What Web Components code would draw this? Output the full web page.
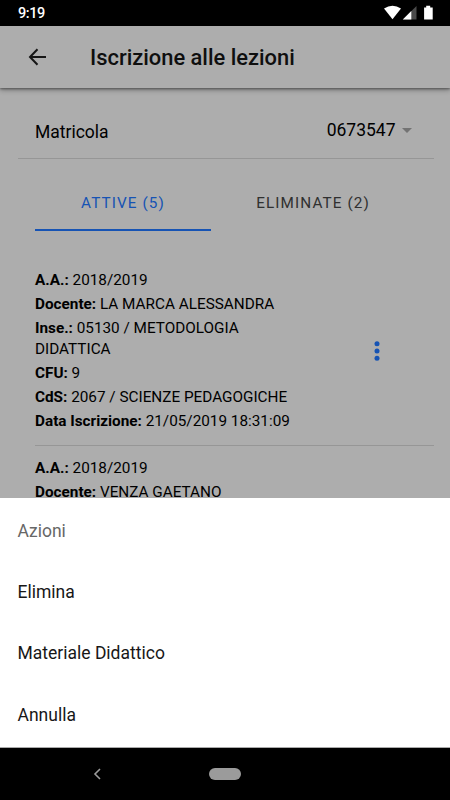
<!DOCTYPE html>
<html lang="it">
<head>
<meta charset="utf-8">
<title>Iscrizione alle lezioni</title>
<style>
html,body{margin:0;height:100%;overflow:hidden}
body{font-family:Roboto,"Noto Sans",sans-serif;background:#000;color:#000}
</style>
</head>
<body>
<phone-screen>
  <status-bar slot="status">9:19</status-bar>
  <app-header>Iscrizione alle lezioni</app-header>
  <select-row label="Matricola">0673547</select-row>
  <tab-bar>
    <tab-item active>ATTIVE (5)</tab-item>
    <tab-item>ELIMINATE (2)</tab-item>
  </tab-bar>
  <lesson-card>
    <lesson-field label="A.A.:">2018/2019</lesson-field>
    <lesson-field label="Docente:">LA MARCA ALESSANDRA</lesson-field>
    <lesson-field label="Inse.:">05130 / METODOLOGIA DIDATTICA</lesson-field>
    <lesson-field label="CFU:">9</lesson-field>
    <lesson-field label="CdS:">2067 / SCIENZE PEDAGOGICHE</lesson-field>
    <lesson-field label="Data Iscrizione:">21/05/2019 18:31:09</lesson-field>
  </lesson-card>
  <lesson-card partial>
    <lesson-field label="A.A.:">2018/2019</lesson-field>
    <lesson-field label="Docente:">VENZA GAETANO</lesson-field>
  </lesson-card>
  <action-sheet slot="sheet" heading="Azioni">
    <sheet-option>Elimina</sheet-option>
    <sheet-option>Materiale Didattico</sheet-option>
    <sheet-option>Annulla</sheet-option>
  </action-sheet>
  <nav-bar slot="nav"></nav-bar>
</phone-screen>
<script>
const define = (name, html) => customElements.define(name, class extends HTMLElement {
  constructor() {
    super();
    this.attachShadow({mode: 'open'}).innerHTML = typeof html === 'function' ? html(this) : html;
  }
});

define('phone-screen', `<style>
:host{display:flex;flex-direction:column;width:450px;height:800px;overflow:hidden;background:#000}
main{height:472px;overflow:hidden;background:#adadad;display:flex;flex-direction:column}
</style><slot name="status"></slot><main><slot></slot></main><slot name="sheet"></slot><slot name="nav"></slot>`);

define('status-bar', `<style>
:host{display:flex;box-sizing:border-box;height:26px;flex:none;background:#000;color:#fff;padding:0 16px 0 18px;justify-content:space-between;align-items:center;font:500 14.5px/26px Roboto,sans-serif;letter-spacing:-.4px}
span{padding-top:2px;line-height:24px}
svg{display:block}
</style><span><slot></slot></span>
<svg width="50" height="16" viewBox="0 0 50 16"><path d="M0 3.4Q8.5-1.8 17 3.4L8.5 14.2Z" fill="#fff"/><path d="M18.8 14.5L32.5 1V14.5Z" fill="#4b4b4b"/><path d="M18.8 14.5L27.3 6.1V14.5Z" fill="#fff"/><path d="M42.2.8h4v1.7h2.5v12h-8.6v-12h2.1Z" fill="#fff"/></svg>`);

define('app-header', `<style>
:host{display:flex;box-sizing:border-box;height:61.5px;flex:none;align-items:center;padding:0 28px;gap:43px;background:#adadad;box-shadow:0 1px 2px #0005,0 2px 5px #0005;position:relative;color:#0f0f0f}
h1{margin:0;padding-top:2px;font-size:21.9px;font-weight:500;line-height:30px;white-space:nowrap}
svg{display:block;margin-top:1px}
</style>
<svg width="19" height="18" viewBox="0 0 19 18" fill="none" stroke="#161616" stroke-width="2"><path d="M18 9H2.5M9.5 1.2L2 9L9.5 16.8"/></svg><h1><slot></slot></h1>`);

define('select-row', el => `<style>
:host{display:flex;box-sizing:border-box;height:71px;flex:none;margin:0 16.5px 0 17.5px;padding:15px 22px 0 17.5px;border-bottom:1px solid #969696;font-size:17.5px;line-height:26px;justify-content:space-between}
label{padding-top:2px}
div{display:flex;align-items:center;height:26px;gap:6px}
i{border:5.5px solid transparent;border-top-color:#737373;border-bottom:0;margin-top:2px}
label,div{margin-top:14px}
</style><label>${el.getAttribute('label')}</label><div><slot></slot><i></i></div>`);

define('tab-bar', `<style>
:host{display:grid;grid-template-columns:176px 204px;flex:none;height:53px;margin:19px 35px 39.5px}
</style><slot></slot>`);

define('tab-item', `<style>
:host{display:flex;box-sizing:border-box;align-items:center;justify-content:center;padding-bottom:1px;font-size:15.3px;font-weight:400;letter-spacing:1.1px;color:#303030;border-bottom:2px solid transparent;white-space:nowrap}
:host([active]){color:#1653b4;border-bottom-color:#1653b4}
</style><slot></slot>`);

define('lesson-card', `<style>
:host{display:flex;box-sizing:border-box;flex:none;margin:0 16.5px 0 35px;padding-bottom:10.1px;border-bottom:1px solid #969696;align-items:center}
:host([partial]){border:0;padding-top:12.8px}
section{width:272px;flex:none}
svg{margin-left:66.5px;margin-top:-2px;flex:none}
:host([partial]) svg{display:none}
</style><section><slot></slot></section><svg width="6" height="20" viewBox="0 0 6 20" fill="#1653b4"><circle cx="3" cy="2.7" r="2.5"/><circle cx="3" cy="10" r="2.5"/><circle cx="3" cy="17.2" r="2.5"/></svg>`);

define('lesson-field', el => `<style>
:host{display:block;font-size:15.3px;line-height:21.9px;margin-bottom:1.85px}
b{font-weight:700}
</style><b>${el.getAttribute('label')}</b> <slot></slot>`);

define('action-sheet', el => `<style>
:host{display:flex;box-sizing:border-box;flex-direction:column;height:250px;flex:none;background:#fff;border-bottom:1px solid #aaa;padding-top:2px}
h2{margin:0;padding:1px 17.5px 0;font-size:17.5px;font-weight:400;color:#676767;line-height:60px;height:60px}
</style><h2>${el.getAttribute('heading')}</h2><slot></slot>`);

define('sheet-option', `<style>
:host{display:flex;align-items:center;height:61.5px;padding:0 17.5px;font-size:17.5px;color:#171717}
</style><slot></slot>`);

define('nav-bar', `<style>
:host{display:flex;box-sizing:border-box;height:52px;flex:none;background:#000;align-items:center;padding-left:93px;gap:108px}
i{width:32px;height:12px;border-radius:6px;background:#9b9b9b}
</style><svg width="8" height="12" viewBox="0 0 8 12" fill="none" stroke="#9b9b9b" stroke-width="1.6"><path d="M7 1L2 6L7 11"/></svg><i></i>`);
</script>
</body>
</html>
